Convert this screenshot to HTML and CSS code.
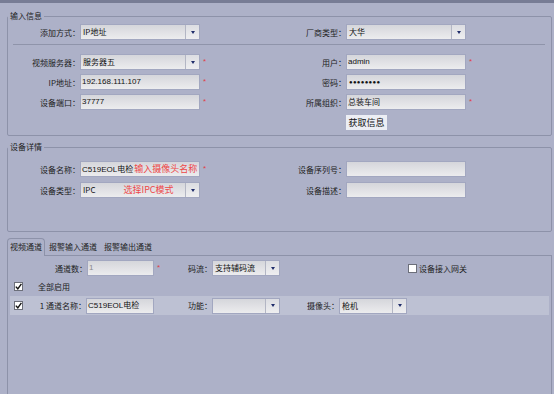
FILE: index.html
```html
<!DOCTYPE html>
<html lang="zh-CN">
<head>
  <meta charset="UTF-8" />
  <title>添加设备</title>
  <link rel="stylesheet" href="styles.css">
</head>
<body>
  <div class="topbar"></div>

  <fieldset class="group info">
    <legend>输入信息</legend>
    <div class="grid first">
      <label>添加方式：</label>
      <div class="select"><span class="val cn">IP地址</span><i class="drop"></i></div>
      <span></span>
      <label>厂商类型：</label>
      <div class="select"><span class="val cn">大华</span><i class="drop"></i></div>
      <span></span>
    </div>
    <hr class="sep">
    <div class="grid">
      <label>视频服务器：</label>
      <div class="select"><span class="val cn">服务器五</span><i class="drop"></i></div>
      <span class="req">*</span>
      <label>用户：</label>
      <div class="input">admin</div>
      <span class="req">*</span>

      <label>IP地址：</label>
      <div class="input">192.168.111.107</div>
      <span class="req">*</span>
      <label>密码：</label>
      <div class="input pwd">●●●●●●●●</div>
      <span></span>

      <label>设备端口：</label>
      <div class="input">37777</div>
      <span class="req">*</span>
      <label>所属组织：</label>
      <div class="input cn">总装车间</div>
      <span class="req">*</span>

      <span></span><span></span><span></span><span></span>
      <div class="btn-cell"><button class="fetch">获取信息</button></div>
    </div>
  </fieldset>

  <fieldset class="group detail">
    <legend>设备详情</legend>
    <div class="grid">
      <label>设备名称：</label>
      <div class="input">C519EOL电检<span class="note">输入摄像头名称</span></div>
      <span class="req">*</span>
      <label>设备序列号：</label>
      <div class="input"></div>
      <span></span>

      <label>设备类型：</label>
      <div class="select"><span class="val cn">IPC<span class="note gap">选择IPC模式</span></span><i class="drop"></i></div>
      <span></span>
      <label>设备描述：</label>
      <div class="input"></div>
      <span></span>
    </div>
  </fieldset>

  <div class="tabs">
    <span class="tab active">视频通道</span>
    <span class="tab">报警输入通道</span>
    <span class="tab">报警输出通道</span>
  </div>

  <div class="panel">
    <div class="row count-row">
      <label class="w-count">通道数：</label>
      <div class="input small muted">1</div>
      <span class="req star-col">*</span>
      <label class="w-stream">码流：</label>
      <div class="select small"><span class="val cn">支持辅码流</span><i class="drop"></i></div>
      <span class="chk gateway"></span>
      <span class="chk-label">设备接入网关</span>
    </div>

    <div class="row all-row">
      <span class="chk on"><svg width="7" height="7" viewBox="0 0 7 7"><path d="M0.8 3.6 L2.8 5.8 L6.4 0.8" fill="none" stroke="#111" stroke-width="1.4"/></svg></span>
      <span class="all-label">全部启用</span>
    </div>

    <div class="row band">
      <span class="chk on"><svg width="7" height="7" viewBox="0 0 7 7"><path d="M0.8 3.6 L2.8 5.8 L6.4 0.8" fill="none" stroke="#111" stroke-width="1.4"/></svg></span>
      <label class="w-name">1 通道名称：</label>
      <div class="input small">C519EOL电检</div>
      <label class="w-func">功能：</label>
      <div class="select small"><span class="val"></span><i class="drop"></i></div>
      <label class="w-cam">摄像头：</label>
      <div class="select small"><span class="val cn">枪机</span><i class="drop"></i></div>
    </div>
  </div>
</body>
</html>
```

FILE: styles.css
```css
* {
  box-sizing: border-box;
  margin: 0;
  padding: 0;
}

html,
body {
  height: 100%;
  overflow: hidden;
}

body {
  background: #adb1c8;
  color: #222;
  font-family: 'Liberation Sans', 'Noto Sans CJK SC', sans-serif;
  font-size: 8px;
}

.topbar {
  height: 3px;
  background: #777c95;
}

/* fieldset groups */

.group {
  margin: 6px 2px 0 7px;
  border: 1px solid #8d92a9;
  border-radius: 2px;
  padding: 0;
  min-width: 0;
}

.group legend {
  margin-left: 0;
  padding: 0 2px;
  font-family: 'Noto Sans CJK SC', sans-serif;
  font-size: 8px;
  line-height: 14px;
  color: #222;
}

.info {
  padding-bottom: 5px;
}

.detail {
  margin-top: 4px;
  padding-top: 7px;
  height: 92px;
}

.grid {
  display: grid;
  grid-template-columns: 72px 120px 14px 132px 120px 14px;
  grid-auto-rows: 16px;
  row-gap: 4px;
  align-items: center;
}

.info .grid {
  margin-top: 9px;
}

.info .grid.first {
  margin-top: 1px;
}

.detail .grid {
  row-gap: 5px;
}

.grid label,
.row label {
  text-align: right;
  font-family: 'Noto Sans CJK SC', sans-serif;
  font-size: 8px;
  white-space: nowrap;
}

.sep {
  border: none;
  border-top: 1px solid #8f94aa;
  margin: 4px 6px 0 5px;
}

/* fields */

.input,
.select {
  height: 16px;
  border: 1px solid #a2a7c0;
  background: linear-gradient(#d5d6db, #ececee);
  font-size: 8px;
  line-height: 14px;
  color: #111;
  white-space: nowrap;
  overflow: hidden;
}

.input {
  padding-left: 1px;
}

.input.cn,
.val.cn {
  font-family: 'Noto Sans CJK SC', sans-serif;
  font-size: 8px;
}

.input.pwd {
  font-size: 6px;
  letter-spacing: 0.3px;
  padding-left: 2px;
}

.input.muted {
  color: #8a8a8a;
}

.select {
  display: flex;
}

.select .val {
  flex: 1;
  padding-left: 2px;
  overflow: hidden;
}

.select .drop {
  width: 14px;
  border-left: 1px solid #b3b6c4;
  background: linear-gradient(#dcdde2, #eeeef0);
  display: flex;
  align-items: center;
  justify-content: center;
}

.select .drop::after {
  content: '';
  border-left: 2.5px solid transparent;
  border-right: 2.5px solid transparent;
  border-top: 3px solid #1f2c6a;
}

.note {
  font-family: 'Noto Sans CJK SC', sans-serif;
  font-size: 9px;
  color: #ee4848;
  margin-left: 1px;
}

.note.gap {
  margin-left: 28px;
}

.req {
  color: #e0404a;
  font-size: 8px;
  padding-left: 3px;
  line-height: 16px;
}

.btn-cell {
  height: 16px;
  margin-top: 1px;
}

.fetch {
  width: 41px;
  height: 15px;
  border: none;
  background: #eceef4;
  font-family: 'Noto Sans CJK SC', sans-serif;
  font-size: 9px;
  color: #111;
}

/* tabs */

.tabs {
  display: flex;
  margin: 6px 0 0 7px;
  height: 17px;
  position: relative;
  z-index: 1;
}

.tab {
  font-family: 'Noto Sans CJK SC', sans-serif;
  font-size: 8px;
  line-height: 16px;
  padding: 0 2px;
  margin-right: 1px;
  border: 1px solid transparent;
  border-bottom: none;
  color: #222;
}

.tab.active {
  border-color: #8d92a9;
  border-radius: 4px 4px 0 0;
  background: #adb1c8;
  height: 18px;
}

.panel {
  margin: 0 2px 0 7px;
  border: 1px solid #8d92a9;
  border-bottom: none;
  height: 140px;
  padding-top: 4px;
}

.row {
  display: flex;
  align-items: center;
}

.row .small {
  width: 68px;
}

.count-row {
  height: 16px;
}

.w-count {
  width: 79px;
}

.count-row .input {
  width: 67px;
}

.star-col {
  width: 16px;
}

.w-stream {
  width: 42px;
}

.chk {
  width: 9px;
  height: 9px;
  border: 1px solid #6c6f7a;
  background: #fff;
  display: flex;
  align-items: center;
  justify-content: center;
}

.gateway {
  margin-left: 128px;
}

.chk-label {
  font-family: 'Noto Sans CJK SC', sans-serif;
  font-size: 8px;
  margin-left: 2px;
}

.all-row {
  height: 12px;
  margin-top: 4px;
  padding-left: 6px;
}

.all-label {
  font-family: 'Noto Sans CJK SC', sans-serif;
  font-size: 8px;
  margin-left: 15px;
}

.band {
  margin: 4px 2px 0 2px;
  height: 19px;
  background: #bdc1d3;
  padding-left: 4px;
}

.band .input,
.band .select {
  height: 16px;
}

.w-name {
  width: 63px;
}

.w-func {
  width: 58px;
}

.w-cam {
  width: 59px;
}
```
